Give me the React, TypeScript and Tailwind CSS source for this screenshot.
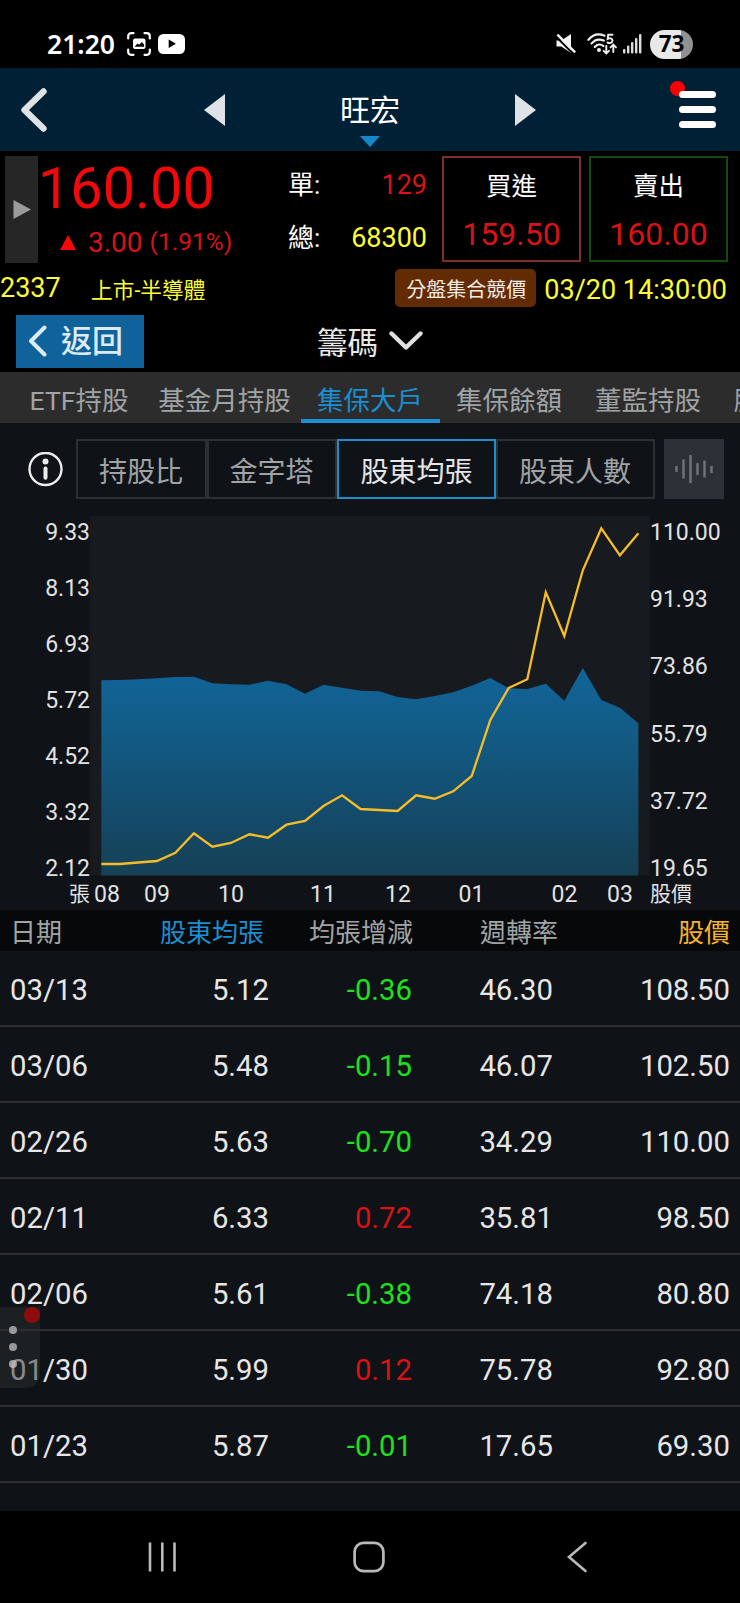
import type { ReactNode } from "react";

const AXIS_LEFT = ["9.33", "8.13", "6.93", "5.72", "4.52", "3.32", "2.12"];
const AXIS_RIGHT = ["110.00", "91.93", "73.86", "55.79", "37.72", "19.65"];

// y offsets inside the plot, one entry per week
const AVG_SHARES = [
  164.3, 164, 163.3, 162.3, 161, 160.7, 167.3, 168.3, 168.7, 164.7, 168.3, 177.7, 168.7, 171.7, 174.7,
  175.3, 181, 183.3, 180, 176.3, 169.7, 162, 172.3, 173, 167.7, 184.7, 152, 184, 191.7, 207.3,
];
const PRICE = [
  348, 348, 346.5, 345, 336.7, 317.3, 330.7, 327, 318.3, 321.7, 308.7, 305, 290, 279.3, 293,
  294, 295, 279.3, 282.7, 275.3, 260, 204.3, 172, 163.3, 76.3, 120, 54.3, 12.3, 39.3, 17.3,
];
const PLOT_LEFT = 11.3;
const PLOT_BOTTOM = 359.5;
const STEP = 18.52;

const MONTHS = [
  { label: "08", x: 17 },
  { label: "09", x: 67 },
  { label: "10", x: 141 },
  { label: "11", x: 233 },
  { label: "12", x: 308 },
  { label: "01", x: 381.5 },
  { label: "02", x: 474.5 },
  { label: "03", x: 530 },
];

const TABS = [
  { label: "ETF持股", width: "w-[139px]" },
  { label: "基金月持股", width: "w-[152px]" },
  { label: "集保大戶", width: "w-[139px]", active: true },
  { label: "集保餘額", width: "w-[139px]" },
  { label: "董監持股", width: "w-[139px]" },
  { label: "股權", width: "w-[85px]" },
];

const MODES = [
  { label: "持股比", width: "w-[131px]" },
  { label: "金字塔", width: "w-[130px]" },
  { label: "股東均張", width: "w-[159px]", active: true },
  { label: "股東人數", width: "w-[159px]" },
];

const ROWS = [
  { date: "03/13", avg: "5.12", diff: "-0.36", turnover: "46.30", price: "108.50" },
  { date: "03/06", avg: "5.48", diff: "-0.15", turnover: "46.07", price: "102.50" },
  { date: "02/26", avg: "5.63", diff: "-0.70", turnover: "34.29", price: "110.00" },
  { date: "02/11", avg: "6.33", diff: "0.72", turnover: "35.81", price: "98.50" },
  { date: "02/06", avg: "5.61", diff: "-0.38", turnover: "74.18", price: "80.80" },
  { date: "01/30", avg: "5.99", diff: "0.12", turnover: "75.78", price: "92.80" },
  { date: "01/23", avg: "5.87", diff: "-0.01", turnover: "17.65", price: "69.30" },
];

function toPoints(values: number[]) {
  return values.map((y, i) => `${(PLOT_LEFT + i * STEP).toFixed(1)},${y}`).join(" ");
}

function StatusBar() {
  return (
    <div className="flex h-[68px] items-center pt-5 pl-[47px]">
      <span className="w-[80px] font-['Noto_Sans',sans-serif] text-[26.5px] leading-7 font-semibold text-white">21:20</span>
      <svg className="h-6 w-6" viewBox="0 0 24 24" fill="none">
        <path
          d="M1.2 6.5V4.2a3 3 0 0 1 3-3h2.3M17.5 1.2h2.3a3 3 0 0 1 3 3v2.3M22.8 17.5v2.3a3 3 0 0 1-3 3h-2.3M6.5 22.8H4.2a3 3 0 0 1-3-3v-2.3"
          stroke="#fff"
          strokeWidth="2.2"
          strokeLinecap="round"
        />
        <rect x="6" y="6.5" width="12.5" height="10.5" rx="2" fill="#fff" />
        <path d="M7.5 14.8l3-3.3 1.7 1.2 2.6-2.7 2.3 2.6v2.2z" fill="#000" />
      </svg>
      <svg className="ml-[7px] h-5 w-[27px]" viewBox="0 0 27 20">
        <rect width="27" height="20" rx="5.5" fill="#fff" />
        <path d="M10.7 5.6v8.4l7.2-4.2z" fill="#000" />
      </svg>
      <svg className="ml-[371px] h-5 w-5" viewBox="0 0 20 20">
        <path d="M0.5 6.5h4.8L15 0v19l-9.7-6.5H0.5z" fill="#f2f2f2" />
        <path d="M-0.4 2.2L17.6 20.2" stroke="#000" strokeWidth="2" />
        <path d="M1.4 0.6L19.2 18.4" stroke="#f2f2f2" strokeWidth="2.4" />
      </svg>
      <svg className="ml-[11px] h-[22px] w-[31px]" viewBox="0 0 31 22" fill="none" stroke="#eee" strokeLinecap="round">
        <path d="M1.5 6.8C6 1.2 12 0.4 17.5 2.7M4.6 10.4c3.4-4 8-4.6 12.2-2.8M7.8 14c2.4-2.8 6-3 8.6-1" strokeWidth="2.2" />
        <circle cx="12" cy="17" r="2" fill="#eee" stroke="none" />
        <path d="M25.5 1.8h-4.3l-.5 4c1.5-.8 4.800-.8 4.800 1.800s-3.400 3-5 1.800" strokeWidth="1.9" />
        <path d="M19.3 13v7.5M16.6 17.8l2.7 2.7 2.7-2.7M26.3 19v-7M23.6 14.4l2.7-2.7 2.7 2.7" strokeWidth="1.9" />
      </svg>
      <svg className="ml-[5px] h-5 w-[19px]" viewBox="0 0 19 20" fill="#ddd">
        <rect x="0" y="15" width="2.4" height="4.5" rx="1" />
        <rect x="4" y="11.5" width="2.4" height="8" rx="1" />
        <rect x="8" y="8" width="2.4" height="11.5" rx="1" />
        <rect x="12" y="4" width="2.4" height="15.5" rx="1" />
        <rect x="16" y="0" width="2.4" height="19.5" rx="1" />
      </svg>
      <div className="ml-2 flex h-[29px] w-[43px] items-center justify-center rounded-full bg-linear-to-r from-[#e9e9e9] from-72% to-[#919191] to-72% font-['Noto_Sans',sans-serif] text-[22.5px] leading-none font-bold text-black">
        73
      </div>
    </div>
  );
}

function Header() {
  return (
    <header className="flex h-[83px] items-center bg-[#002135] pl-5">
      <svg className="h-11 w-7" viewBox="0 0 28 44" fill="none">
        <path d="M23.5 3.5L4.5 22l19 18.5" stroke="#dfe3e6" strokeWidth="6.4" strokeLinecap="round" strokeLinejoin="round" />
      </svg>
      <svg className="ml-[156px] h-8 w-[21px]" viewBox="0 0 21 32">
        <path d="M21 0v32L0 16z" fill="#dfe2e6" />
      </svg>
      <div className="relative ml-[91px] flex h-full w-[108px] items-center justify-center pt-0.5 text-[30px] leading-9 text-white">
        旺宏
        <svg className="absolute bottom-1 left-[44px] h-[11px] w-5" viewBox="0 0 20 11">
          <path d="M0 0h20L10 11z" fill="#1787c9" />
        </svg>
      </div>
      <svg className="ml-[91px] h-8 w-[21px]" viewBox="0 0 21 32">
        <path d="M0 0v32l21-16z" fill="#dfe2e6" />
      </svg>
      <div className="relative ml-[143px] flex w-[37px] flex-col gap-2">
        <span className="absolute -top-[10px] -left-[9px] size-[15px] rounded-full bg-[#fb0000]" />
        <span className="relative h-[7px] rounded-full bg-white" />
        <span className="h-[7px] rounded-full bg-white" />
        <span className="h-[7px] rounded-full bg-white" />
      </div>
    </header>
  );
}

function OrderBox({ label, price, border }: { label: string; price: string; border: string }) {
  return (
    <div className={`flex h-[106px] w-[139px] flex-col items-center border-2 pt-2.5 ${border}`}>
      <span className="text-[25.5px] leading-9 text-white">{label}</span>
      <span className="mt-3 text-[32px] leading-9 text-[#d91215]">{price}</span>
    </div>
  );
}

function Quote() {
  return (
    <section>
      <div className="flex h-[115px] items-start pt-[5px] pl-[5px]">
        <div className="flex h-[107px] w-[33px] items-center bg-[#262626] pl-2">
          <svg className="h-[19px] w-[18px]" viewBox="0 0 18 19">
            <path d="M0.5 0v19L18 9.5z" fill="#9b9b9b" />
          </svg>
        </div>
        <div className="w-[250px] pt-px">
          <div className="text-[57.5px] leading-[64px] text-[#f0080a]">160.00</div>
          <div className="mt-[3px] flex h-9 items-center pl-[22px] text-[#d91215]">
            <svg className="h-[15px] w-4" viewBox="0 0 16 15">
              <path d="M0 15h16L8 0z" fill="#fb0507" />
            </svg>
            <span className="ml-3 pt-px text-[28px] leading-9">3.00</span>
            <span className="ml-[7px] text-[24.5px] leading-9">(1.91%)</span>
          </div>
        </div>
        <div className="w-[139px] text-[26px] leading-9">
          <div className="flex items-center justify-between pt-[11px]">
            <span className="text-white">單:</span>
            <span className="text-[27px] text-[#d91215]">129</span>
          </div>
          <div className="flex items-center justify-between pt-[17px]">
            <span className="text-white">總:</span>
            <span className="text-[27px] text-[#fdfd33]">68300</span>
          </div>
        </div>
        <div className="ml-[15px] flex gap-2">
          <OrderBox label="買進" price="159.50" border="border-[#7c2f2f]" />
          <OrderBox label="賣出" price="160.00" border="border-[#17490f]" />
        </div>
      </div>
      <div className="flex h-[44px] items-center text-[#fdfd33]">
        <span className="w-[91px] text-[27px] leading-8">2337</span>
        <span className="pt-[5px] text-[21.7px] leading-8">上市-半導體</span>
        <div className="ml-auto flex items-center pr-[13px]">
          <span className="flex h-[38px] w-[141px] items-center justify-center rounded-[5px] bg-[#632b04] pt-[3px] pl-px text-[20px] text-[#f3ece6]">
            分盤集合競價
          </span>
          <span className="ml-2 pt-[3px] text-[27px] leading-8">03/20 14:30:00</span>
        </div>
      </div>
    </section>
  );
}

function SectionBar() {
  return (
    <div className="flex h-[62px] items-center pl-4">
      <button className="flex h-[53px] w-32 items-center bg-[#10629a] pl-3 text-[31px] leading-9 text-[#dcebf5]">
        <svg className="mr-[14px] h-8 w-[19px]" viewBox="0 0 19 32" fill="none">
          <path d="M16.5 2.5L3 16l13.5 13.5" stroke="#dcebf5" strokeWidth="4" strokeLinecap="round" strokeLinejoin="round" />
        </svg>
        <span className="pt-px font-medium">返回</span>
      </button>
      <div className="ml-[173px] flex items-center gap-[11px] text-[30.5px] leading-9 text-[#e8e8e8]">
        <span className="pt-1.5">籌碼</span>
        <svg className="h-5 w-[34px]" viewBox="0 0 34 20" fill="none">
          <path d="M2.5 2.5L17 16.5l14.500-14" stroke="#e0e0e0" strokeWidth="4.400" strokeLinecap="round" strokeLinejoin="round" />
        </svg>
      </div>
    </div>
  );
}

function Tabs() {
  return (
    <nav className="flex h-[51px] overflow-hidden bg-[#2c2c2c] pl-[10px] text-[26.5px] leading-9 whitespace-nowrap">
      {TABS.map((tab) => (
        <div
          key={tab.label}
          className={`flex shrink-0 items-center justify-center border-b-4 pt-[11px] pr-px ${tab.width} ${
            tab.active ? "border-[#1b8fd2] text-[#1b8fd2]" : "border-transparent text-[#a0a4a6]"
          }`}
        >
          {tab.label}
        </div>
      ))}
    </nav>
  );
}

function ModeBar() {
  return (
    <div className="flex items-center pt-4 pl-7">
      <svg className="h-[35px] w-[35px]" viewBox="0 0 35 35" fill="none">
        <circle cx="17.5" cy="17" r="16" stroke="#ececec" strokeWidth="2.4" />
        <circle cx="17.5" cy="9.5" r="3" fill="#ececec" />
        <path d="M17.5 16.5v9.3" stroke="#ececec" strokeWidth="4" strokeLinecap="round" />
      </svg>
      <div className="ml-[13px] flex text-[28px] leading-9">
        {MODES.map((mode) => (
          <div
            key={mode.label}
            className={`flex h-[60px] items-center justify-center border-2 pt-2 ${mode.width} ${
              mode.active ? "border-[#1d8ccb] text-[#e6e6e6]" : "border-[#2d3033] pr-px text-[#a0a4a6]"
            }`}
          >
            {mode.label}
          </div>
        ))}
      </div>
      <div className="ml-[9px] flex h-[60px] w-[60px] items-center justify-center bg-[#2d3037]">
        <svg className="h-7 w-[38px]" viewBox="0 0 38 28" stroke="#70747b" strokeWidth="2.4">
          <path d="M1.5 11v6M8.5 4.5v19M15.5 0v28M22.5 8v12M29.5 5.5v17M36.5 11v7" />
        </svg>
      </div>
    </div>
  );
}

function Chart() {
  const right = PLOT_LEFT + STEP * (AVG_SHARES.length - 1);

  return (
    <section className="flex h-[377px] pt-[17px] text-[23px] leading-8 text-[#e2e2e2]">
      <div className="mt-px flex h-[368px] w-[90px] shrink-0 flex-col justify-between text-right">
        {AXIS_LEFT.map((value) => (
          <span key={value}>{value}</span>
        ))}
      </div>
      <svg className="h-[360px] w-[560px] shrink-0" viewBox="0 0 560 360">
        <defs>
          <linearGradient id="area" gradientUnits="userSpaceOnUse" x1="0" y1="150" x2="0" y2="360">
            <stop offset="0" stopColor="#11649a" />
            <stop offset="0.25" stopColor="#125e8a" />
            <stop offset="0.75" stopColor="#144968" />
            <stop offset="1" stopColor="#164155" />
          </linearGradient>
        </defs>
        <rect width="560" height={PLOT_BOTTOM} fill="#171a1e" />
        <polygon points={`${PLOT_LEFT},${PLOT_BOTTOM} ${toPoints(AVG_SHARES)} ${right},${PLOT_BOTTOM}`} fill="url(#area)" />
        <polyline points={toPoints(PRICE)} fill="none" stroke="#f6bd27" strokeWidth="2.3" />
      </svg>
      <div className="mt-px flex h-[368px] flex-col justify-between">
        {AXIS_RIGHT.map((value) => (
          <span key={value}>{value}</span>
        ))}
      </div>
    </section>
  );
}

function MonthAxis() {
  return (
    <div className="flex h-[34px] text-[21px] leading-[37px] text-[#e2e2e2]">
      <span className="w-[90px] text-right">張</span>
      <svg className="h-[34px] w-[560px] text-[23px]" viewBox="0 0 560 34" fill="#e2e2e2">
        {MONTHS.map((month) => (
          <text key={month.label} x={month.x} y="26" textAnchor="middle">
            {month.label}
          </text>
        ))}
      </svg>
      <span>股價</span>
    </div>
  );
}

function Cells({ className, children }: { className: string; children: ReactNode }) {
  return <div className={`grid grid-cols-[130px_139px_144px_144px_1fr] items-center pr-[10px] pl-[10px] ${className}`}>{children}</div>;
}

function HoldingsTable() {
  return (
    <section className="flex-1">
      <Cells className="h-[41px] bg-[#070809] pt-1 text-[26px] leading-9 text-[#a0a4a6]">
        <span>日期</span>
        <span className="pr-[15px] text-right text-[#1b8fd2]">股東均張</span>
        <span className="pr-[10px] text-right">均張增減</span>
        <span className="pr-[9px] text-right">週轉率</span>
        <span className="text-right text-[#f6b32a]">股價</span>
      </Cells>
      {ROWS.map((row) => (
        <Cells key={row.date} className="h-[76px] border-b-2 border-[#2b2d31] pt-[3px] text-[29.3px] leading-9 text-[#e6e6e6]">
          <span>{row.date}</span>
          <span className="pr-[10px] text-right">{row.avg}</span>
          <span className={`pr-[11px] text-right ${row.diff.startsWith("-") ? "text-[#1ee01e]" : "text-[#d91215]"}`}>
            {row.diff}
          </span>
          <span className="pr-[14px] text-right">{row.turnover}</span>
          <span className="text-right">{row.price}</span>
        </Cells>
      ))}
    </section>
  );
}

function EdgeHandle() {
  return (
    <div className="absolute top-[1307px] left-0 h-[81px] w-10 rounded-br-[14px] bg-[#2b2d30]/50">
      <span className="absolute top-0 right-0 size-4 rounded-full bg-[#8f0c0c]" />
      <div className="flex flex-col gap-[9px] pt-[19px] pl-[9px]">
        <span className="size-2 rounded-full bg-[#96989a]" />
        <span className="size-2 rounded-full bg-[#96989a]" />
        <span className="size-2 rounded-full bg-[#c0c1c2]/80" />
      </div>
    </div>
  );
}

function NavigationBar() {
  return (
    <div className="flex h-[92px] items-center justify-between bg-black pr-[152px] pl-[148px]">
      <svg className="h-[30px] w-7" viewBox="0 0 28 30" stroke="#b9b9b9" strokeWidth="2.6">
        <path d="M2 0.5v29M14.3 0.5v29M26.5 0.5v29" />
      </svg>
      <svg className="-ml-[4px] h-8 w-8" viewBox="0 0 32 32" fill="none" stroke="#b9b9b9" strokeWidth="2.7">
        <rect x="1.6" y="1.8" width="28.8" height="28.4" rx="9" />
      </svg>
      <svg className="h-8 w-[22px]" viewBox="0 0 22 32" fill="none" stroke="#b9b9b9" strokeWidth="2.6" strokeLinecap="round">
        <path d="M19.5 2L3 16l16.5 14" />
      </svg>
    </div>
  );
}

export default function App() {
  return (
    <div className="relative flex h-[1603px] w-[740px] flex-col overflow-hidden bg-black font-[Roboto,'Noto_Sans_CJK_TC',sans-serif]">
      <StatusBar />
      <Header />
      <Quote />
      <SectionBar />
      <main className="flex flex-1 flex-col bg-[#0f1216]">
        <Tabs />
        <ModeBar />
        <Chart />
        <MonthAxis />
        <HoldingsTable />
      </main>
      <NavigationBar />
      <EdgeHandle />
    </div>
  );
}
